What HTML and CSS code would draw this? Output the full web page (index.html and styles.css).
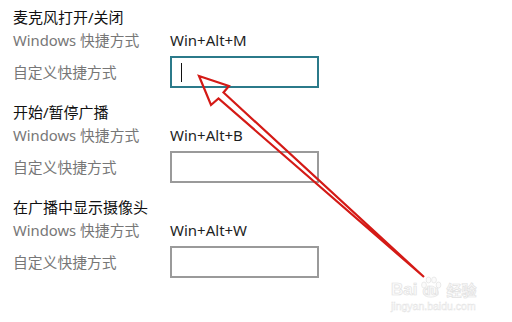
FILE: index.html
```html
<!DOCTYPE html>
<html lang="zh-CN">
<head>
<meta charset="utf-8">
<title>快捷方式</title>
<link rel="stylesheet" href="styles.css">
</head>
<body>
<div class="page">
  <section class="group">
    <div class="title">麦克风打开/关闭</div>
    <div class="row"><span class="label">Windows 快捷方式</span><span class="value">Win+Alt+M</span></div>
    <div class="row row-input"><span class="label">自定义快捷方式</span><div class="box box-focus"><span class="caret"></span></div></div>
  </section>
  <section class="group">
    <div class="title">开始/暂停广播</div>
    <div class="row"><span class="label">Windows 快捷方式</span><span class="value">Win+Alt+B</span></div>
    <div class="row row-input"><span class="label">自定义快捷方式</span><div class="box"></div></div>
  </section>
  <section class="group">
    <div class="title">在广播中显示摄像头</div>
    <div class="row"><span class="label">Windows 快捷方式</span><span class="value">Win+Alt+W</span></div>
    <div class="row row-input"><span class="label">自定义快捷方式</span><div class="box"></div></div>
  </section>

  <svg class="arrow" width="512" height="322" viewBox="0 0 512 322">
    <polygon points="199,76 229,86 223.5,92.5 424,277 218.5,98.5 211,105" fill="none" stroke="#d41a16" stroke-width="2.2" stroke-linejoin="miter"/>
  </svg>

  <div class="watermark">
    <div class="wm-logo"><span>Bai</span><span class="paw-wrap"><svg class="paw" width="24" height="22" viewBox="0 0 24 22"><ellipse cx="5" cy="9" rx="2.4" ry="3"/><ellipse cx="9.5" cy="4" rx="2.4" ry="3"/><ellipse cx="15" cy="4" rx="2.4" ry="3"/><ellipse cx="19.5" cy="9" rx="2.4" ry="3"/><path d="M12 10c-4 0-8 5-7 8.5s12 3.5 14 0S16 10 12 10z"/></svg><span class="du">du</span></span><span class="wm-cn">经验</span></div>
    <div class="wm-url">jingyan.baidu.com</div>
  </div>
</div>
</body>
</html>
```

FILE: styles.css
```css
html, body {
  margin: 0;
  padding: 0;
  background: #ffffff;
}
.page {
  position: relative;
  width: 512px;
  height: 322px;
  overflow: hidden;
  padding: 7px 0 0 13px;
  box-sizing: border-box;
  font-family: "Noto Sans", "Noto Sans CJK SC", sans-serif;
}
.group {
  margin-bottom: 14px;
}
.title {
  height: 20px;
  line-height: 20px;
  font-size: 15px;
  color: #111111;
}
.row {
  display: flex;
  align-items: center;
  height: 20px;
  margin-top: 3px;
}
.row-input {
  height: 32px;
  margin-top: 6px;
}
.label {
  width: 157px;
  flex: none;
  font-size: 14.8px;
  color: #777777;
  line-height: 20px;
}
.value {
  font-size: 15px;
  color: #1e1e1e;
  line-height: 20px;
}
.box {
  width: 149px;
  height: 32px;
  box-sizing: border-box;
  border: 2px solid #9a9a9a;
  display: flex;
  align-items: center;
  padding-left: 9px;
}
.box-focus {
  border-color: #2b7a8a;
}
.caret {
  width: 1px;
  height: 19px;
  background: #111;
}
.arrow {
  position: absolute;
  left: 0;
  top: 0;
}
.watermark {
  position: absolute;
  left: 391px;
  top: 276px;
  color: #fbfbfb;
  font-family: "Liberation Sans", sans-serif;
}
.wm-logo {
  display: flex;
  align-items: flex-end;
  height: 22px;
  font-size: 17px;
  font-weight: bold;
  line-height: 17px;
  -webkit-text-stroke: 0.7px #e2e2e2;
}
.paw-wrap {
  position: relative;
  width: 24px;
  height: 22px;
  margin-left: 2px;
}
.paw {
  position: absolute;
  left: 0;
  top: 0;
  fill: #fbfbfb;
  stroke: #e2e2e2;
  stroke-width: 0.7;
}
.du {
  position: absolute;
  left: 3px;
  bottom: 0;
  font-size: 13px;
  line-height: 14px;
}
.wm-cn {
  font-family: "Noto Sans CJK SC", sans-serif;
  font-size: 15px;
  line-height: 17px;
  margin-left: 3px;
}
.wm-url {
  font-size: 10.5px;
  line-height: 12px;
  margin-top: 2px;
  -webkit-text-stroke: 0.4px #e2e2e2;
}
```
